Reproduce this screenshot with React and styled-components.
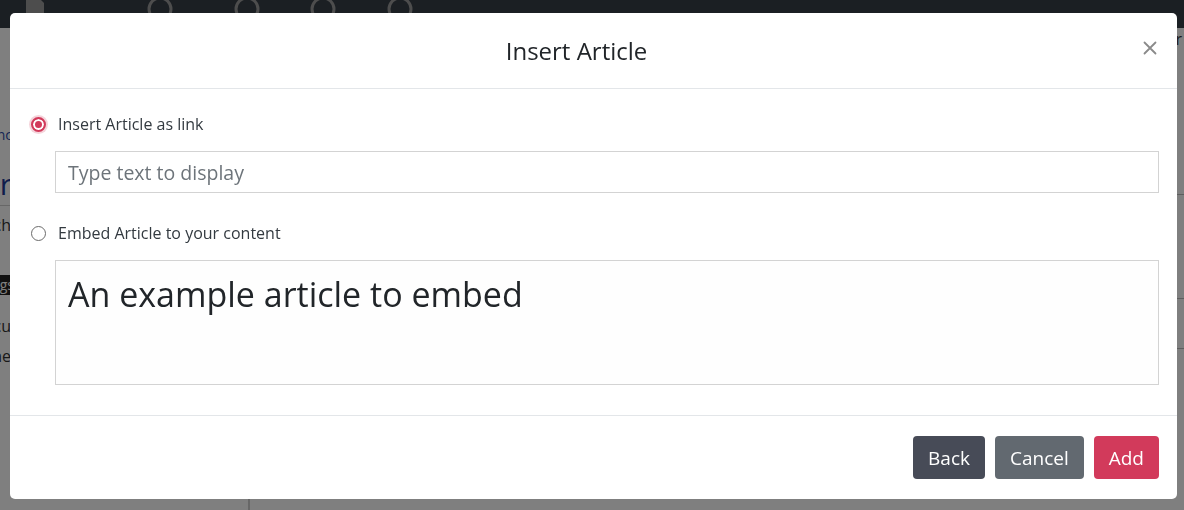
import { useState } from "react";
import styled, { createGlobalStyle } from "styled-components";

const GlobalStyle = createGlobalStyle`
    html, body {
        margin: 0;
        padding: 0;
        height: 100%;
        overflow: hidden;
    }
    body {
        font-family: 'Open Sans', 'Noto Sans', sans-serif;
        color: #212529;
        background: #ffffff;
    }
`

export default function App() {
    const [mode, setMode] = useState("link");
    return (
        <>
            <GlobalStyle />
            <PageWrapper>
                <TopBar>
                    <BarIcon x={20} />
                    <BarIcon x={145} round />
                    <BarIcon x={232} round />
                    <BarIcon x={308} round />
                    <BarIcon x={385} round />
                </TopBar>
                <PageMain>
                    <Sidebar>
                        <SideLink>Branc</SideLink>
                        <SideTitle>Editor</SideTitle>
                        <SideText gap={9}>Search</SideText>
                        <SideTag>Tags</SideTag>
                        <SideText gap={21}>Docu</SideText>
                        <SideText gap={10}>Scene</SideText>
                    </Sidebar>
                    <PageContent>
                        <ContentHead>Editor</ContentHead>
                        <ContentLine size={104} />
                        <ContentLine size={50} />
                    </PageContent>
                </PageMain>
            </PageWrapper>
            <Backdrop />
            <Modal>
                <ModalHeader>
                    <ModalTitle>Insert Article</ModalTitle>
                    <CloseButton aria-label="Close">
                        <svg width="14" height="14" viewBox="0 0 14 14">
                            <path d="M1.5 1.5 L12.5 12.5 M12.5 1.5 L1.5 12.5" stroke="#8a8a8a" strokeWidth="1.8" strokeLinecap="round" />
                        </svg>
                    </CloseButton>
                </ModalHeader>
                <ModalBody>
                    <OptionRow>
                        <Radio type="radio" name="mode" checked={mode === "link"} onChange={() => setMode("link")} />
                        <OptionLabel>Insert Article as link</OptionLabel>
                    </OptionRow>
                    <TextInput placeholder="Type text to display" />
                    <OptionRow spaced>
                        <Radio type="radio" name="mode" checked={mode === "embed"} onChange={() => setMode("embed")} />
                        <OptionLabel>Embed Article to your content</OptionLabel>
                    </OptionRow>
                    <EmbedBox>An example article to embed</EmbedBox>
                </ModalBody>
                <ModalFooter>
                    <FooterButton variant="back">Back</FooterButton>
                    <FooterButton variant="cancel">Cancel</FooterButton>
                    <FooterButton variant="add">Add</FooterButton>
                </ModalFooter>
            </Modal>
        </>
    )
}

function BarIcon({ x, round }) {
    return (
        <IconSpot style={{ left: x }}>
            <svg width="30" height="30" viewBox="0 0 30 30">
                {round
                    ? <circle cx="15" cy="15" r="11" fill="none" stroke="#9a9a9a" strokeWidth="3" />
                    : <path d="M6 3 H18 L24 9 V27 H6 Z" fill="#9a9a9a" />}
            </svg>
        </IconSpot>
    )
}

const PageWrapper = styled.div`
    width: 100%;
    height: 100vh;
    display: flex;
    flex-direction: column;
    background: #ffffff;
`

const TopBar = styled.div`
    position: relative;
    height: 28px;
    background: #363e47;
    flex-shrink: 0;
`

const IconSpot = styled.div`
    position: absolute;
    top: -6px;
`

const PageMain = styled.div`
    flex: 1;
    display: flex;
`

const Sidebar = styled.div`
    width: 248px;
    border-right: 2px solid #cfcfcf;
    display: flex;
    flex-direction: column;
    padding-top: 98px;
`

/* the sidebar words end just under the modal's left edge, so only their tails show */
const SideLink = styled.div`
    display: flex;
    justify-content: flex-end;
    width: 12px;
    white-space: nowrap;
    font-size: 14px;
    line-height: 18px;
    color: #2b4aa8;
    height: 37px;
`

const SideTitle = styled.div`
    display: flex;
    justify-content: flex-end;
    width: 12px;
    white-space: nowrap;
    font-size: 30px;
    line-height: 41px;
    color: #1d3a99;
    height: 42px;
    box-sizing: content-box;
    padding-right: 236px;
    border-bottom: 1px solid #cfcfcf;
`

const SideText = styled.div`
    display: flex;
    justify-content: flex-end;
    width: 11px;
    white-space: nowrap;
    font-size: 16px;
    line-height: 20px;
    color: #333;
    margin-top: ${props => props.gap}px;
    height: 20px;
`

const SideTag = styled.div`
    display: flex;
    justify-content: flex-end;
    width: 14px;
    white-space: nowrap;
    font-size: 14px;
    line-height: 20px;
    height: 20px;
    color: #fff;
    background: #222;
    margin-top: 40px;
`

const PageContent = styled.div`
    flex: 1;
    display: flex;
    flex-direction: column;
`

const ContentHead = styled.div`
    font-size: 16px;
    color: #333;
    text-align: right;
    padding: 0 2px 0 0;
    height: 166px;
    border-bottom: 1px solid #bdbdbd;
`

const ContentLine = styled.div`
    height: ${props => props.size - 1}px;
    border-bottom: 1px solid #bdbdbd;
`

const Backdrop = styled.div`
    position: fixed;
    inset: 0;
    background: rgba(0, 0, 0, 0.5);
`

const Modal = styled.div`
    position: fixed;
    top: 13px;
    left: 10px;
    width: 1167px;
    height: 486px;
    background: #ffffff;
    border-radius: 5px;
    display: flex;
    flex-direction: column;
    box-sizing: border-box;
    overflow: hidden;
`

const ModalHeader = styled.div`
    height: 76px;
    box-sizing: border-box;
    border-bottom: 1px solid #e3e6e9;
    display: flex;
    align-items: center;
    padding: 0 15px 0 20px;
`

const ModalTitle = styled.h5`
    flex: 1;
    margin: 0;
    padding-right: 15px;
    text-align: center;
    font-size: 24px;
    font-weight: 400;
    color: #212529;
    line-height: 1.5;
`

const CloseButton = styled.button`
    border: none;
    background: none;
    padding: 0;
    width: 24px;
    height: 30px;
    display: flex;
    align-items: center;
    justify-content: center;
    margin-top: -6px;
    cursor: pointer;
`

const ModalBody = styled.div`
    padding: 25px 18px 30px 21px;
    display: flex;
    flex-direction: column;
    border-bottom: 1px solid #e3e6e9;
`

const OptionRow = styled.label`
    display: flex;
    align-items: center;
    height: 20px;
    gap: 12px;
    margin-top: ${props => props.spaced ? "30px" : "0"};
    margin-bottom: 17px;
    cursor: pointer;
`

const Radio = styled.input`
    appearance: none;
    margin: 0;
    width: 15px;
    height: 15px;
    border-radius: 50%;
    border: 1px solid #6b6b6b;
    background: #fff;
    box-sizing: border-box;
    flex-shrink: 0;
    &:checked {
        border: 2px solid #d23a5b;
        background: #d23a5b;
        box-shadow: inset 0 0 0 2px #ffffff, 0 0 0 2px rgba(210, 58, 91, 0.22);
    }
`

const OptionLabel = styled.span`
    font-size: 16px;
    color: #333a40;
`

const TextInput = styled.input`
    margin-left: 24px;
    height: 42px;
    box-sizing: border-box;
    border: 1px solid #d3d3d3;
    border-radius: 0;
    padding: 0 12px;
    font-family: 'Open Sans', sans-serif;
    font-size: 19.5px;
    color: #212529;
    outline: none;
    &::placeholder {
        color: #6d747a;
    }
`

const EmbedBox = styled.div`
    margin-left: 24px;
    height: 125px;
    box-sizing: border-box;
    border: 1px solid #d3d3d3;
    background: #fefefe;
    padding: 12px 12px;
    font-size: 34px;
    line-height: 42px;
    color: #212529;
`

const ModalFooter = styled.div`
    flex: 1;
    display: flex;
    justify-content: flex-end;
    align-items: center;
    gap: 10px;
    padding: 0 18px;
`

const buttonColors = {
    back: "#474b57",
    cancel: "#626970",
    add: "#d23a5b",
}

const FooterButton = styled.button`
    height: 43px;
    padding: 0 15px;
    border: none;
    border-radius: 4px;
    background: ${props => buttonColors[props.variant]};
    color: #ffffff;
    font-family: 'Open Sans', sans-serif;
    font-size: 19px;
    cursor: pointer;
`
